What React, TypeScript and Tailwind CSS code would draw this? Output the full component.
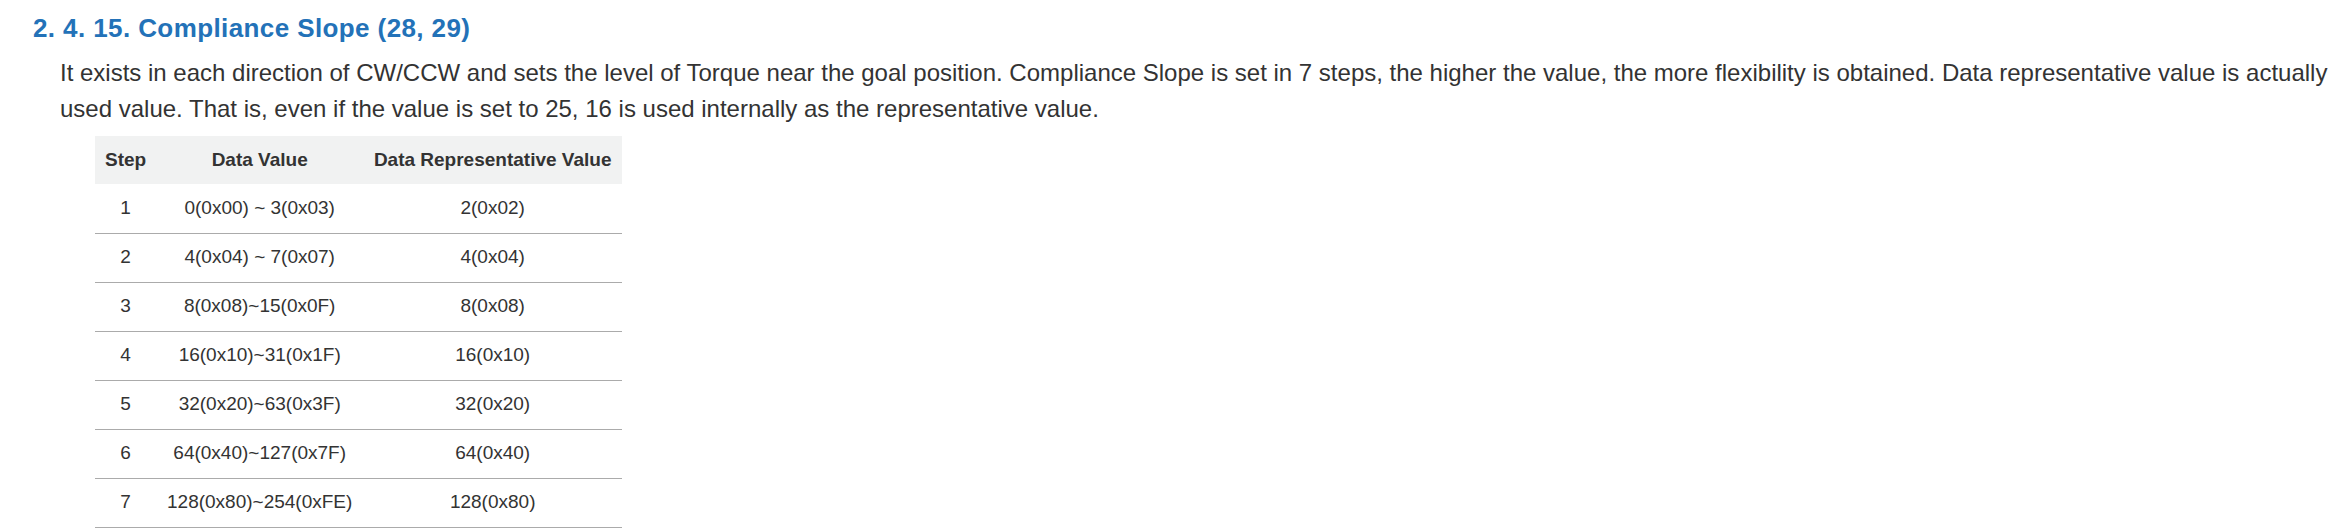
const rows = [
  { step: '1', value: '0(0x00) ~ 3(0x03)', rep: '2(0x02)' },
  { step: '2', value: '4(0x04) ~ 7(0x07)', rep: '4(0x04)' },
  { step: '3', value: '8(0x08)~15(0x0F)', rep: '8(0x08)' },
  { step: '4', value: '16(0x10)~31(0x1F)', rep: '16(0x10)' },
  { step: '5', value: '32(0x20)~63(0x3F)', rep: '32(0x20)' },
  { step: '6', value: '64(0x40)~127(0x7F)', rep: '64(0x40)' },
  { step: '7', value: '128(0x80)~254(0xFE)', rep: '128(0x80)' },
];

export default function App() {
  return (
    <div className="bg-white min-h-screen text-[#333] font-['Liberation_Sans',Arial,sans-serif]">
      <div className="pt-[10px] pl-[33px]">
        {/* Section title */}
        <h3 className="text-[26px] leading-[36px] font-bold tracking-[0.4px] text-[#2372b8]">
          2. 4. 15. Compliance Slope (28, 29)
        </h3>

        <div className="pl-[27px] mt-[9px]">
          <p className="text-[24px] leading-[36px] whitespace-nowrap">
            It exists in each direction of CW/CCW and sets the level of Torque near the goal position. Compliance Slope is set in 7 steps, the higher the value, the more flexibility is obtained. Data representative value is actually
            <br />
            used value. That is, even if the value is set to 25, 16 is used internally as the representative value.
          </p>

          <table className="mt-[9px] ml-[35px] border-collapse text-[19px]">
            <thead>
              <tr className="bg-[#f1f2f2] h-[48px]">
                <th className="w-[60px] px-[10px] font-bold text-center">Step</th>
                <th className="w-[207px] px-[10px] font-bold text-center">Data Value</th>
                <th className="w-[259px] px-[10px] font-bold text-center">Data Representative Value</th>
              </tr>
            </thead>
            <tbody>
              {rows.map((r) => (
                <tr key={r.step} className="h-[49px] border-b border-[#ababab]">
                  <td className="px-[10px] text-center">{r.step}</td>
                  <td className="px-[10px] text-center">{r.value}</td>
                  <td className="px-[10px] text-center">{r.rep}</td>
                </tr>
              ))}
            </tbody>
          </table>
        </div>
      </div>
    </div>
  );
}
